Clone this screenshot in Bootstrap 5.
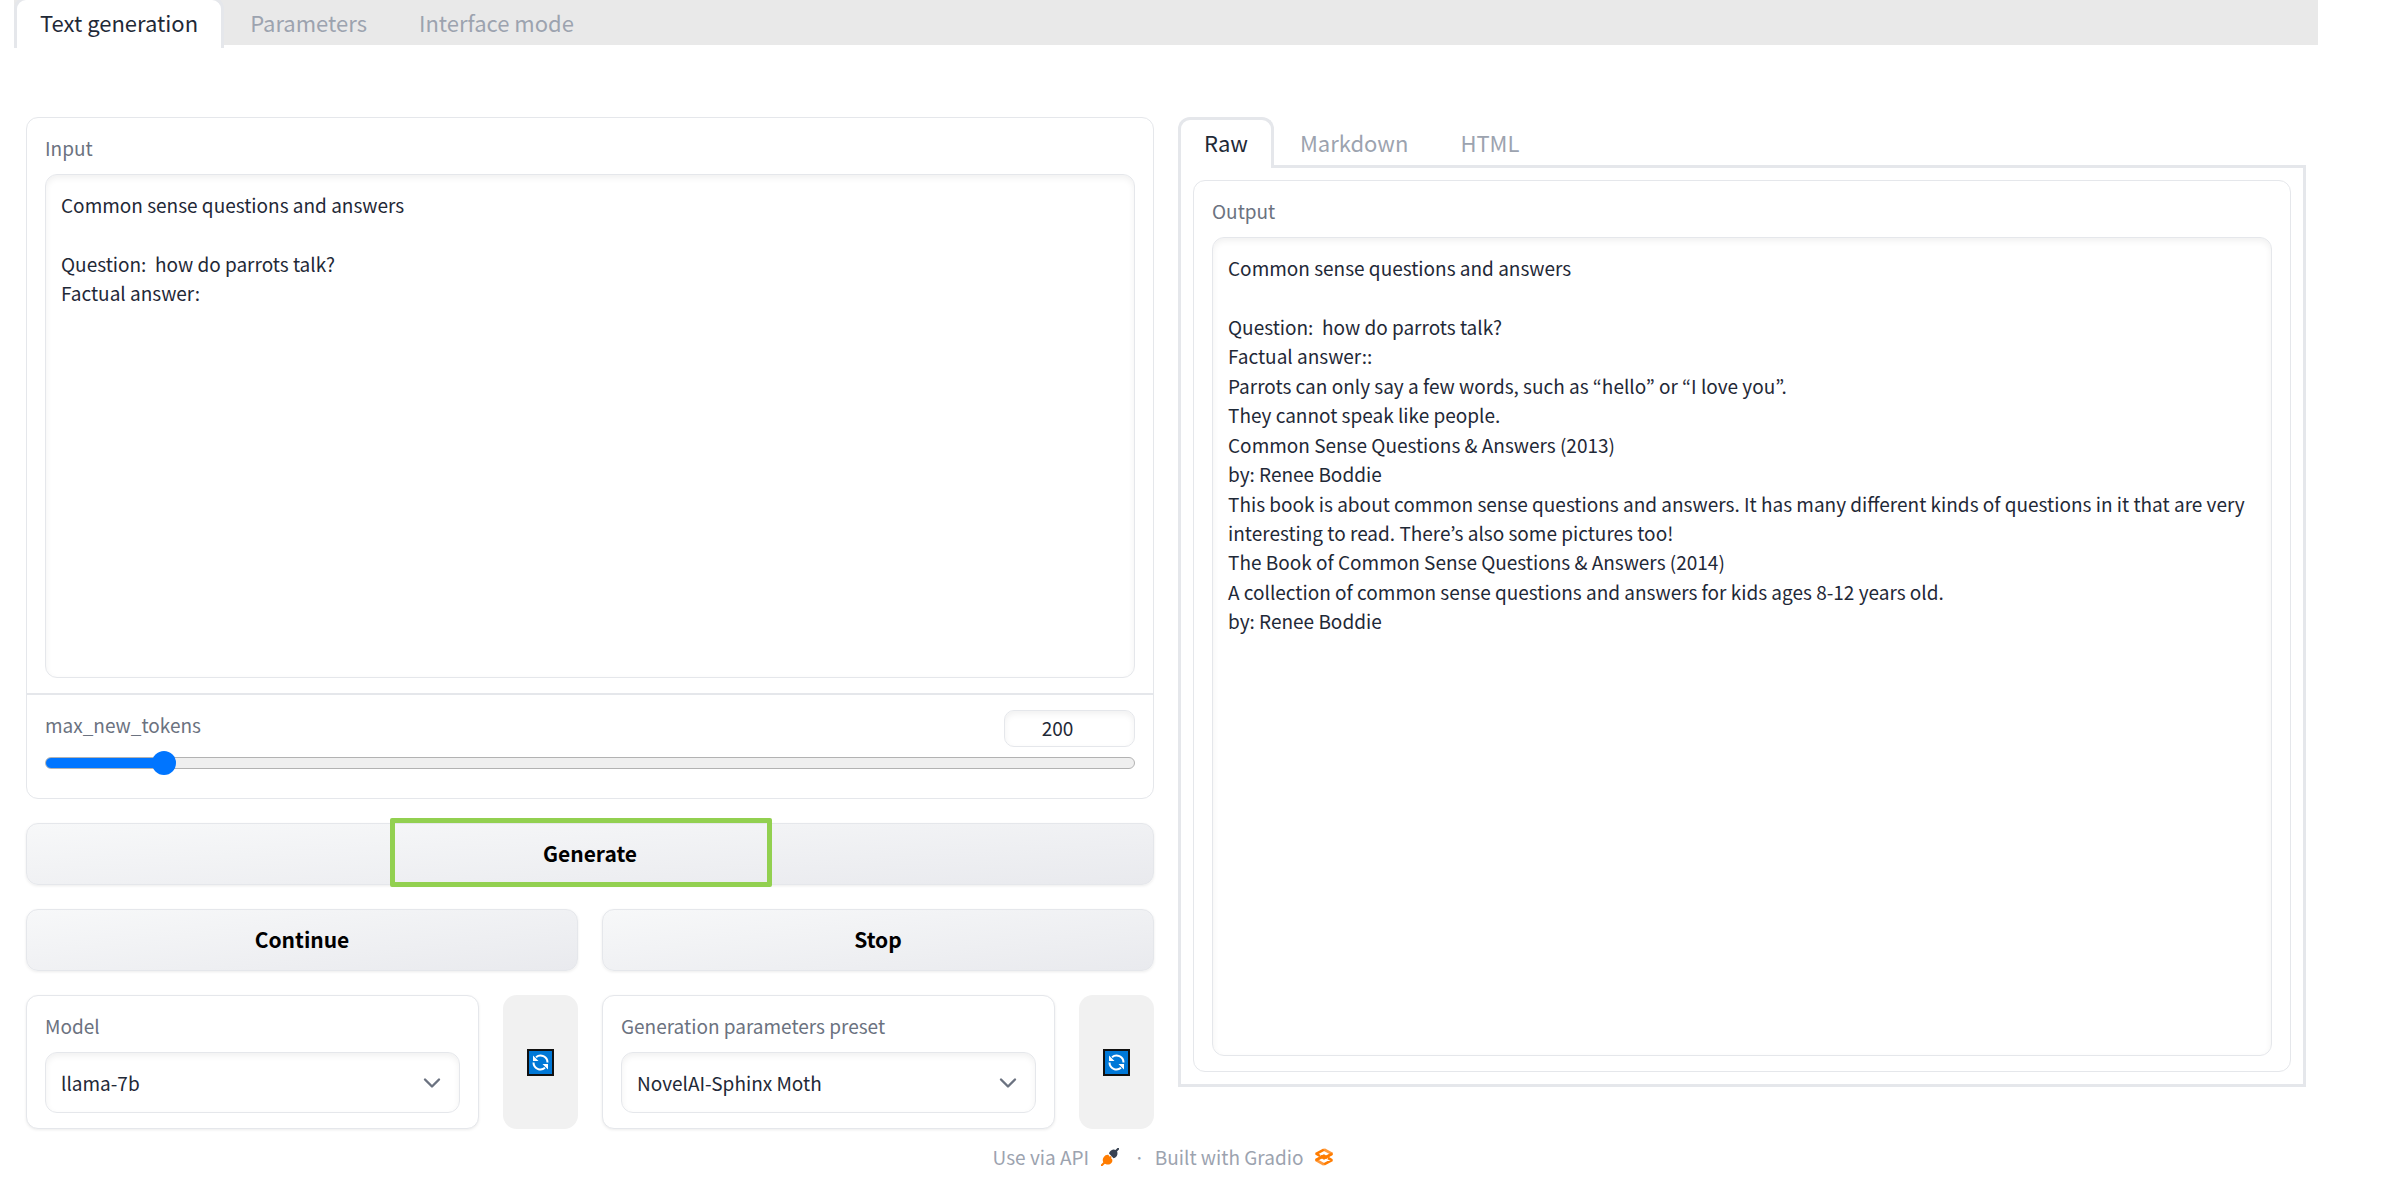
<!DOCTYPE html>
<html lang="en">
<head>
<meta charset="utf-8">
<meta name="viewport" content="width=device-width, initial-scale=1">
<title>Text generation</title>
<link href="https://cdn.jsdelivr.net/npm/bootstrap@5.3.0/dist/css/bootstrap.min.css" rel="stylesheet">
<style>
  :root { --line: #e5e7eb; --ink: #1f2937; --muted: #6b7280; --faint: #9ca3af; --soft-inset: inset 0 3px 6px 0 rgba(0,0,0,.06); }
  body { font-family: "Noto Sans CJK KR", "Open Sans", sans-serif; font-size: 19px; line-height: 1.55; color: var(--ink); background: #fff; overflow-x: hidden; }
  .app-shell { padding: 0 87px 0 14px; }

  .tab-strip { border-bottom: 3px solid var(--line); flex-wrap: nowrap; height: 51px; }
  .tab-strip .nav-link { height: 51px; margin-bottom: -3px; padding: 4px 23px; border: 3px solid transparent; border-bottom: 0; border-radius: 12px 12px 0 0; font-size: 22px; line-height: 36px; color: var(--faint); white-space: nowrap; }
  .tab-strip .nav-link.active { color: var(--ink); background: #fff; border-color: var(--line); }
  .tab-strip-main { margin-top: -3px; height: 48px; border-bottom: 0; background: #e9e9e9; }

  .main-area { padding: 72px 12px 0; }
  .two-cols { gap: 24px; }
  .block-card { border: 1px solid var(--line); border-radius: 12px; background: #fff; overflow: hidden; }
  .block-pad { padding: 15px 18px; }
  .field-label { display: block; margin-bottom: 12px; line-height: 29px; color: var(--muted); }
  .field-box { border: 1px solid var(--line); border-radius: 12px; padding: 15px; font-size: 19px; line-height: 1.55; color: var(--ink); box-shadow: var(--soft-inset); resize: none; display: block; }
  .prompt-box { height: 504px; }
  .output-box { flex: 1 1 auto; }
  .slider-block { border-top: 2px solid var(--line); padding-bottom: 23px; }
  .num-box { width: 131px; height: 37px; padding: 0 30px 2px 6px; text-align: center; border-radius: 10px; }

  .token-range { -webkit-appearance: none; appearance: none; display: block; width: 100%; height: 24px; margin: 4px 0 0; background: transparent; }
  .token-range::-webkit-slider-runnable-track { height: 12px; border: 1px solid #b2b2b2; border-radius: 6px; background: linear-gradient(to right, #0075ff var(--fill), #efefef var(--fill)); }
  .token-range::-webkit-slider-thumb { -webkit-appearance: none; width: 24px; height: 24px; margin-top: -7px; border-radius: 50%; background: #0075ff; }

  .act-btn { height: 62px; border: 1px solid var(--line); border-radius: 12px; background: linear-gradient(to bottom right, #f7f8f9, #e9eaee); color: #000; font-size: 21px; font-weight: 600; box-shadow: 0 1px 3px rgba(0,0,0,.08); padding: 0 0 3px; line-height: 36px; }
  .act-btn:hover { border-color: var(--line); color: #000; }
  .callout-frame { position: absolute; left: 32.3%; width: 33.8%; top: -5px; bottom: -2px; border: 5px solid #92d050; border-radius: 2px; pointer-events: none; }
  .gap-24 { gap: 24px; }
  .pick-card { box-shadow: 0 1px 3px rgba(0,0,0,.08); }
  .pick-box { height: 61px; padding: 0 50px 0 15px; background: #fff url("data:image/svg+xml,%3Csvg xmlns='http://www.w3.org/2000/svg' viewBox='0 0 18 18'%3E%3Cpath d='M2 5.5l7 7 7-7' fill='none' stroke='%236b7280' stroke-width='2.4' stroke-linecap='round' stroke-linejoin='round'/%3E%3C/svg%3E") no-repeat right 18px center / 18px 18px; }
  .sync-btn { flex: 0 0 75px; border: 0; border-radius: 14px; background: #f1f1f1; padding: 0; }

  .out-panel { border: 3px solid var(--line); border-top: 0; padding: 12px; height: 919px; }
  .page-foot { color: var(--faint); padding: 13px 6px 0 0; line-height: 29px; }
  .page-foot a { color: inherit; text-decoration: none; gap: 12px; }
  .foot-dot { margin: 0 10px 0 15px; }
</style>
</head>
<body>
<div class="app-shell">
  <nav class="nav nav-tabs tab-strip tab-strip-main" aria-label="Sections">
    <a class="nav-link active" href="#" aria-current="page">Text generation</a>
    <a class="nav-link" href="#">Parameters</a>
    <a class="nav-link" href="#">Interface mode</a>
  </nav>

  <main class="main-area">
    <div class="two-cols d-flex align-items-start">
      <section class="d-flex flex-column gap-24 w-50">
        <div class="block-card">
          <div class="block-pad">
            <label class="field-label" for="prompt">Input</label>
            <textarea class="field-box prompt-box w-100" id="prompt" spellcheck="false">Common sense questions and answers

Question:  how do parrots talk?
Factual answer:</textarea>
          </div>
          <div class="block-pad slider-block">
            <div class="d-flex justify-content-between">
              <label class="field-label mb-0" for="tokens">max_new_tokens</label>
              <input class="field-box num-box" id="tokens-num" type="text" inputmode="numeric" value="200" aria-label="max_new_tokens value">
            </div>
            <input class="token-range" id="tokens" type="range" min="1" max="2000" value="200" style="--fill:10.8%">
          </div>
        </div>

        <div class="position-relative">
          <button type="button" class="btn act-btn w-100 d-block">Generate</button>
          <div class="callout-frame"></div>
        </div>

        <div class="d-flex gap-24">
          <button type="button" class="btn act-btn w-50">Continue</button>
          <button type="button" class="btn act-btn w-50">Stop</button>
        </div>

        <div class="d-flex gap-24">
          <div class="d-flex gap-24 w-50">
            <div class="block-card block-pad pick-card flex-grow-1">
              <label class="field-label" for="model">Model</label>
              <select class="form-select field-box pick-box" id="model"><option>llama-7b</option></select>
            </div>
            <button type="button" class="sync-btn" aria-label="Refresh models">
              <svg class="d-block mx-auto" width="27" height="27" viewBox="0 0 27 27"><path fill="#111" d="M0 0h27v27H0z"/><path fill="#0078d7" d="M2 2h23v23H2z"/><g fill="none" stroke="#fff" stroke-width="2"><path d="M9 8.200a7 7 0 0 1 11.500 5.300"/><path d="M18 18.800A7 7 0 0 1 6.500 13.500"/></g><path fill="#fff" d="M6 6.500v5.500h5.500zM21 20.500V15h-5.500z"/></svg>
            </button>
          </div>
          <div class="d-flex gap-24 w-50">
            <div class="block-card block-pad pick-card flex-grow-1">
              <label class="field-label" for="preset">Generation parameters preset</label>
              <select class="form-select field-box pick-box" id="preset"><option>NovelAI-Sphinx Moth</option></select>
            </div>
            <button type="button" class="sync-btn" aria-label="Refresh presets">
              <svg class="d-block mx-auto" width="27" height="27" viewBox="0 0 27 27"><path fill="#111" d="M0 0h27v27H0z"/><path fill="#0078d7" d="M2 2h23v23H2z"/><g fill="none" stroke="#fff" stroke-width="2"><path d="M9 8.200a7 7 0 0 1 11.500 5.300"/><path d="M18 18.800A7 7 0 0 1 6.500 13.500"/></g><path fill="#fff" d="M6 6.500v5.500h5.500zM21 20.500V15h-5.500z"/></svg>
            </button>
          </div>
        </div>
      </section>

      <section class="w-50">
        <nav class="nav nav-tabs tab-strip" aria-label="Output format">
          <a class="nav-link active" href="#" aria-current="true">Raw</a>
          <a class="nav-link" href="#">Markdown</a>
          <a class="nav-link" href="#">HTML</a>
        </nav>
        <div class="out-panel d-flex">
          <div class="block-card block-pad d-flex flex-column flex-grow-1">
            <label class="field-label" for="output">Output</label>
            <textarea class="field-box output-box w-100" id="output" spellcheck="false">Common sense questions and answers

Question:  how do parrots talk?
Factual answer::
Parrots can only say a few words, such as “hello” or “I love you”.
They cannot speak like people.
Common Sense Questions &amp; Answers (2013)
by: Renee Boddie
This book is about common sense questions and answers. It has many different kinds of questions in it that are very interesting to read. There’s also some pictures too!
The Book of Common Sense Questions &amp; Answers (2014)
A collection of common sense questions and answers for kids ages 8-12 years old.
by: Renee Boddie</textarea>
          </div>
        </div>
      </section>
    </div>
  </main>

  <footer class="page-foot d-flex justify-content-center align-items-center">
    <a href="#" class="d-flex align-items-center">Use via API
      <svg width="18" height="18" viewBox="0 0 18 18"><path d="M.8 17.200 4 14" stroke="#ff7c00" stroke-width="2" stroke-linecap="round"/><path fill="#ff7c00" d="M2.500 9.500C4 7 6 6.500 7.300 6.800L8.800 8.800l1-.8 1 1-.9 1 1.300 1.300c.6 2-.2 3.700-2 4.700-2 1-5 .5-6.200-1C1.300 13.400 1.500 11 2.500 9.500z"/><path d="M17.200.8 15 3" stroke="#374151" stroke-width="2" stroke-linecap="round"/><path fill="#374151" d="M8 5.500C8.500 3.300 10.500 1.800 12.300 1.600c1.500-.1 3.200.8 3.900 2.200.6 1.700.2 3.700-1 5-.7.800-1.700 1.400-2.700 1.500z"/></svg>
    </a>
    <span class="foot-dot">·</span>
    <a href="#" class="d-flex align-items-center">Built with Gradio
      <svg width="18" height="18" viewBox="0 0 18 18" fill="none" stroke-width="2.600"><path stroke="#ff9a3c" d="M9 1.500 17 5.800 9 10.200M9 7.600 1 12 9 16.500"/><path stroke="#ff7c00" d="M.6 6.200 9 1.600M.8 5.500 5 8M1 12.200 9 7.800l3.500 2M5.500 8.200 9 10.200l8-4.400M17.400 11.800 9 16.400M17.200 12.400 13 10"/></svg>
    </a>
  </footer>
</div>
<script src="https://cdn.jsdelivr.net/npm/bootstrap@5.3.0/dist/js/bootstrap.bundle.min.js"></script>
</body>
</html>
